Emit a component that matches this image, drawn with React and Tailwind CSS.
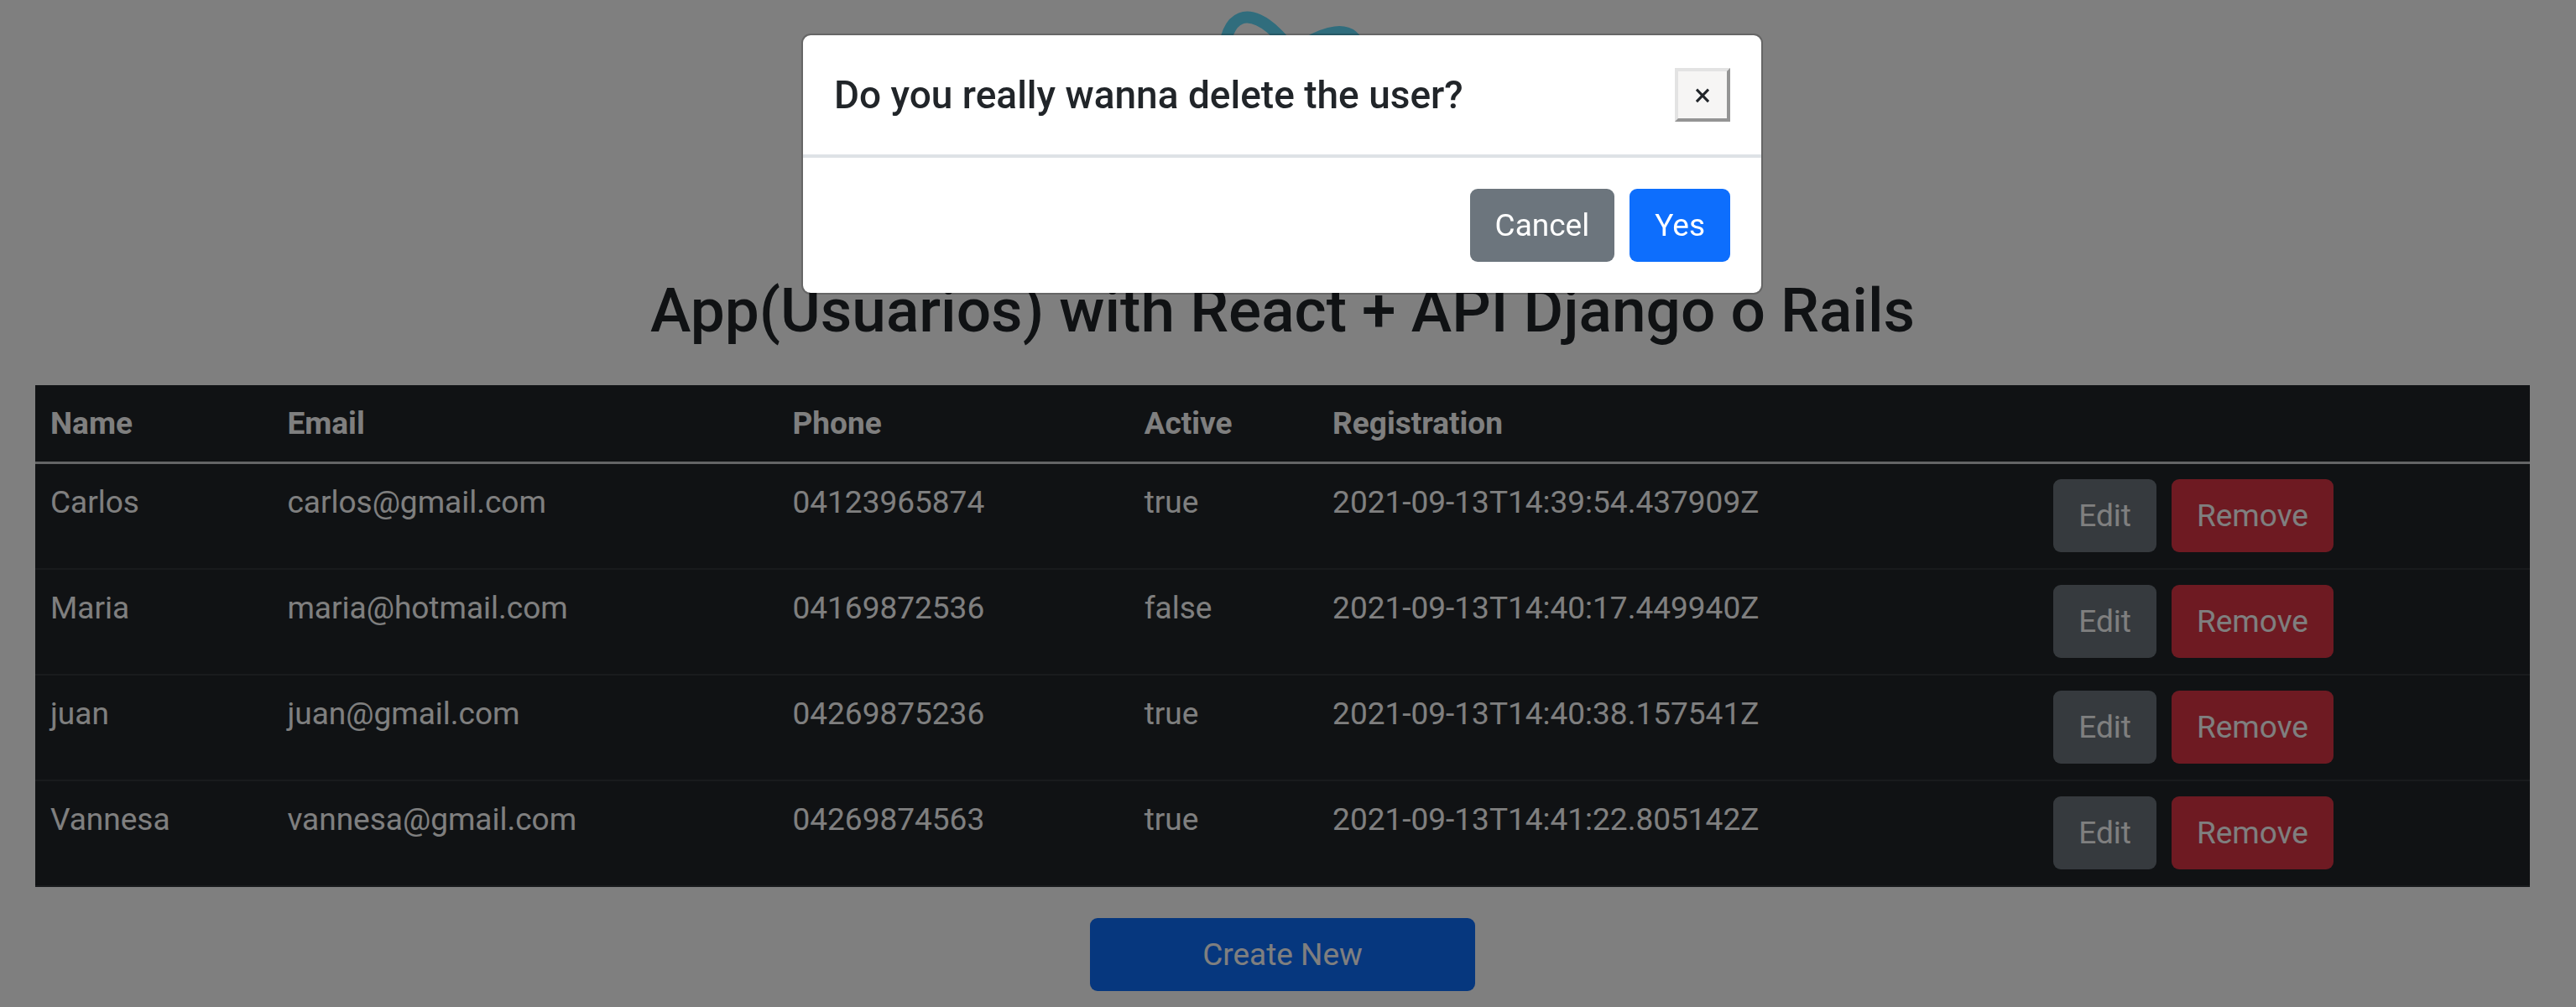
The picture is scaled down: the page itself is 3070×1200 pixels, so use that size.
const users = [
  { name: "Carlos", email: "carlos@gmail.com", phone: "04123965874", active: "true", registration: "2021-09-13T14:39:54.437909Z" },
  { name: "Maria", email: "maria@hotmail.com", phone: "04169872536", active: "false", registration: "2021-09-13T14:40:17.449940Z" },
  { name: "juan", email: "juan@gmail.com", phone: "04269875236", active: "true", registration: "2021-09-13T14:40:38.157541Z" },
  { name: "Vannesa", email: "vannesa@gmail.com", phone: "04269874563", active: "true", registration: "2021-09-13T14:41:22.805142Z" },
];

function Button({ className, children }) {
  return (
    <button type="button" className={`h-[87px] rounded-[9px] px-[30px] leading-[55px] text-white ${className}`}>
      {children}
    </button>
  );
}

function ReactLogo() {
  return (
    <svg viewBox="-145 -148 294 294" className="size-[294px]" aria-hidden="true">
      <g fill="none" stroke="#61dafb" strokeWidth="14">
        <ellipse rx="135" ry="52" transform="rotate(69)" />
        <ellipse rx="135" ry="52" transform="rotate(129)" />
        <ellipse rx="135" ry="52" transform="rotate(189)" />
      </g>
      <circle r="27" fill="#61dafb" />
    </svg>
  );
}

function UserTable() {
  return (
    <table className="w-full table-fixed border-separate border-spacing-0 bg-[#212529] text-left text-white">
      <colgroup>
        <col className="w-[9.5%]" />
        <col className="w-[20.25%]" />
        <col className="w-[14.1%]" />
        <col className="w-[7.55%]" />
        <col className="w-[28.9%]" />
        <col />
      </colgroup>
      <thead>
        <tr>
          {["Name", "Email", "Phone", "Active", "Registration"].map((label) => (
            <th key={label} scope="col" className="border-b-3 border-[#c8cacc] px-[18px] pt-[18px] pb-[18px] font-bold">
              {label}
            </th>
          ))}
          <td className="border-b-3 border-[#c8cacc]" />
        </tr>
      </thead>
      <tbody className="[&_td]:border-b-2 [&_td]:border-[#33373b] [&_td]:px-[18px] [&_td]:pt-[18px] [&_td]:pb-[19px] [&_td]:align-top">
        {users.map((user) => (
          <tr key={user.email}>
            <td>{user.name}</td>
            <td>{user.email}</td>
            <td>{user.phone}</td>
            <td>{user.active}</td>
            <td>{user.registration}</td>
            <td>
              <div className="flex gap-[18px]">
                <Button className="bg-[#6c757d]">Edit</Button>
                <Button className="bg-[#dc3545]">Remove</Button>
              </div>
            </td>
          </tr>
        ))}
      </tbody>
    </table>
  );
}

function DeleteDialog() {
  return (
    <div className="fixed inset-0 flex items-start justify-center bg-black/50 pt-10 pr-[14px]">
      <div
        role="dialog"
        aria-modal="true"
        aria-labelledby="delete-title"
        className="w-[1146px] rounded-[11px] border-2 border-black/20 bg-white bg-clip-padding"
      >
        <div className="flex items-center justify-between border-b-4 border-[#dee2e6] px-[37px] py-[39px]">
          <h2 id="delete-title" className="text-[46px] leading-[62px] font-medium">
            Do you really wanna delete the user?
          </h2>
          <button
            type="button"
            aria-label="Close"
            className="h-16 w-[66px] border-4 border-t-[#e3e3e3] border-r-[#949494] border-b-[#949494] border-l-[#e3e3e3] bg-[#f6f5f4] text-[37px] leading-[55px]"
          >
            ×
          </button>
        </div>
        <div className="flex justify-end gap-[18px] p-[37px]">
          <Button className="bg-[#6c757d]">Cancel</Button>
          <Button className="bg-[#0d6efd]">Yes</Button>
        </div>
      </div>
    </div>
  );
}

export default function App() {
  return (
    <div className="min-h-screen bg-white font-[Roboto,sans-serif] text-[37px] leading-[55px] text-[#212529]">
      <main className="flex flex-col items-center pr-[55px] pb-[18px] pl-[42px]">
        <ReactLogo />
        <h1 className="mt-8 mb-[45px] text-[73px] leading-[88px] font-medium">
          App(Usuarios) with React + API Django o Rails
        </h1>
        <UserTable />
        <Button className="mt-[37px] w-[459px] bg-[#0d6efd]">Create New</Button>
      </main>
      <DeleteDialog />
    </div>
  );
}
